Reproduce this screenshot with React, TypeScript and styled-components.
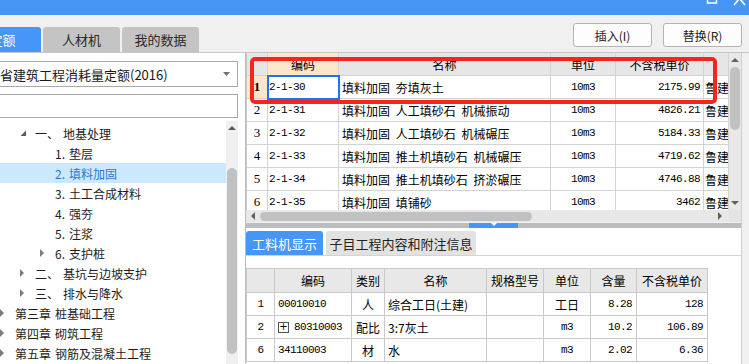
import React from "react";
import styled, { createGlobalStyle } from "styled-components";

const CJK = `"Noto Sans CJK SC", "Noto Sans", sans-serif`;
const MONO = `"Liberation Mono", "Noto Sans CJK SC", monospace`;
const BLUE = "#4596f6";

const Global = createGlobalStyle`
  html, body { margin: 0; padding: 0; }
  body { font-family: ${CJK}; font-size: 12px; color: #111; background: #f0f0f0; }
  * { box-sizing: border-box; }
`;

const Root = styled.div`
  position: relative;
  width: 749px;
  height: 364px;
  overflow: hidden;
  display: flex;
  flex-direction: column;
  background: #f0f0f0;
`;

const TitleBar = styled.div`
  height: 15px;
  flex: none;
  background: ${BLUE};
  display: flex;
  justify-content: flex-end;
  padding-right: 3px;
  overflow: hidden;
`;

const Toolbar = styled.div`
  height: 37px;
  flex: none;
  display: flex;
  align-items: flex-end;
`;

const Tabs = styled.div`
  display: flex;
  gap: 2px;
  margin-left: -36px;
`;

const Tab = styled.div<{ $active?: boolean }>`
  width: 77px;
  height: 25px;
  border-radius: 3px 3px 0 0;
  background: ${(p) => (p.$active ? BLUE : "#c4c4c4")};
  color: ${(p) => (p.$active ? "#fff" : "#2a2a2a")};
  font-size: 13px;
  display: flex;
  align-items: center;
  justify-content: center;
`;

const Buttons = styled.div`
  margin-left: auto;
  margin-bottom: 5px;
  padding-right: 7px;
  display: flex;
  gap: 11px;
`;

const Button = styled.div`
  width: 79px;
  height: 24px;
  border: 1px solid #b4b4b4;
  border-radius: 3px;
  background: #fdfdfd;
  color: #222;
  font-size: 12px;
  display: flex;
  align-items: center;
  justify-content: center;
`;

const Main = styled.div`
  flex: 1;
  display: flex;
  border-top: 1px solid #c6c6c6;
  min-height: 0;
`;

const LeftPanel = styled.div`
  width: 246px;
  flex: none;
  background: #fff;
  border-right: 1px solid #bdbdbd;
  display: flex;
  flex-direction: column;
  padding-top: 8px;
  overflow: hidden;
`;

const Select = styled.div`
  height: 26px;
  margin: 0 7px 0 -30px;
  border: 1px solid #a9a9a9;
  padding: 0 7px 0 3px;
  font-size: 13px;
  color: #1a1a1a;
  display: flex;
  align-items: center;
  justify-content: space-between;
  white-space: nowrap;
`;

const Search = styled.div`
  height: 24px;
  margin: 7px 7px 0 -30px;
  border: 1px solid #a9a9a9;
`;

const TreeArea = styled.div`
  flex: 1;
  margin-top: 3px;
  display: flex;
  min-height: 0;
`;

const TreeList = styled.div`
  flex: 1;
  padding-top: 2px;
  overflow: hidden;
`;

const TreeRow = styled.div<{ $level: number; $selected?: boolean }>`
  height: 20px;
  display: flex;
  align-items: center;
  padding-left: ${(p) => p.$level * 20}px;
  background: ${(p) => (p.$selected ? "#cce8ff" : "transparent")};
  color: ${(p) => (p.$selected ? "#3273d6" : "#1c1c1c")};
  font-size: 12px;
  white-space: nowrap;
`;

const Toggle = styled.span`
  width: 15px;
  flex: none;
  display: flex;
  align-items: center;
`;

const Label = styled.span`
  display: flex;
  gap: 4px;
`;

const VTrack = styled.div<{ $bg: string }>`
  width: 12px;
  flex: none;
  background: ${(p) => p.$bg};
  display: flex;
  flex-direction: column;
  align-items: center;
`;

const ArrowBox = styled.div<{ $h: number }>`
  height: ${(p) => p.$h}px;
  flex: none;
  display: flex;
  align-items: center;
  justify-content: center;
`;

const VThumb = styled.div<{ $top: number; $h: number }>`
  margin-top: ${(p) => p.$top}px;
  height: ${(p) => p.$h}px;
  width: 10px;
  border-radius: 5px;
  background: #c1c1c1;
  flex: none;
`;

const Spacer = styled.div`
  flex: 1;
`;

const LeftTrackWrap = styled.div`
  margin-right: 7px;
  display: flex;
`;

const RightPanel = styled.div`
  flex: 1;
  display: flex;
  min-width: 0;
`;

const Content = styled.div`
  flex: 1;
  display: flex;
  flex-direction: column;
  min-width: 0;
`;

const Strip = styled.div`
  width: 8px;
  flex: none;
  background: #f0f0f0;
  border-left: 1px solid #cfcfcf;
`;

const Upper = styled.div`
  height: 157px;
  flex: none;
  display: flex;
`;

const GridBox = styled.div`
  flex: 1;
  background: #fff;
  border-left: 1px solid #c8c8c8;
  overflow: hidden;
`;

const GRow = styled.div<{ $cols: string; $h: number }>`
  display: grid;
  grid-template-columns: ${(p) => p.$cols};
  height: ${(p) => p.$h}px;
`;

const Cell = styled.div<{
  $align?: "left" | "center" | "right";
  $bg?: string;
  $mono?: boolean;
  $pad?: number;
  $focus?: boolean;
  $line?: string;
}>`
  border-right: 1px solid ${(p) => p.$line || "#d3d3d3"};
  border-bottom: 1px solid ${(p) => p.$line || "#d3d3d3"};
  background: ${(p) => p.$bg || "#fff"};
  display: flex;
  align-items: center;
  justify-content: ${(p) =>
    p.$align === "center" ? "center" : p.$align === "right" ? "flex-end" : "flex-start"};
  padding: 0 ${(p) => (p.$align === "right" ? p.$pad ?? 3 : 0)}px 0
    ${(p) => (p.$align === "left" || !p.$align ? p.$pad ?? 2 : 0)}px;
  font-family: ${(p) => (p.$mono ? MONO : CJK)};
  font-size: ${(p) => (p.$mono ? "11px" : "12px")};
  letter-spacing: ${(p) => (p.$mono ? "-0.6px" : "0")};
  word-spacing: 3px;
  white-space: nowrap;
  overflow: hidden;
  color: #000;
  outline: ${(p) => (p.$focus ? "2px solid #2272f0" : "none")};
  outline-offset: -1px;
  position: relative;
  z-index: ${(p) => (p.$focus ? 1 : 0)};
`;

const RowNum = styled(Cell)<{ $bold?: boolean }>`
  font-family: "Liberation Serif", serif;
  font-size: 13px;
  letter-spacing: 0;
  font-weight: ${(p) => (p.$bold ? 700 : 400)};
`;

const HScrollRow = styled.div`
  height: 12px;
  flex: none;
  display: flex;
`;

const HTrack = styled.div`
  flex: 1;
  background: #e8e8e8;
  display: flex;
  align-items: center;
  padding: 0 7px 0 5px;
`;

const HThumb = styled.div`
  width: 272px;
  height: 9px;
  margin-left: 5px;
  border-radius: 5px;
  background: #c1c1c1;
`;

const Corner = styled.div`
  width: 12px;
  background: #e4e4e4;
`;

const Splitter = styled.div`
  height: 5px;
  flex: none;
  margin-top: 1px;
  background: #bdbdbd;
  display: flex;
  justify-content: center;
`;

const SplitHandle = styled.div`
  width: 49px;
  background: ${BLUE};
  display: flex;
  justify-content: center;
  align-items: flex-start;
`;

const Bottom = styled.div`
  flex: 1;
  background: #fff;
  padding-top: 3px;
  display: flex;
  flex-direction: column;
  min-height: 0;
`;

const BTabs = styled.div`
  height: 25px;
  flex: none;
  display: flex;
  gap: 3px;
  border-bottom: 1px solid #d3d3d3;
`;

const BTab = styled.div<{ $active?: boolean; $w: number }>`
  width: ${(p) => p.$w}px;
  height: 24px;
  border-radius: 3px 3px 0 0;
  background: ${(p) => (p.$active ? BLUE : "#e2e2e2")};
  color: ${(p) => (p.$active ? "#fff" : "#222")};
  font-size: 13px;
  display: flex;
  align-items: center;
  justify-content: center;
`;

const BGrid = styled.div`
  margin-top: 12px;
  width: 462px;
  border-left: 1px solid #c9c9c9;
  border-top: 1px solid #c9c9c9;
`;

const PlusBox = styled.span`
  width: 11px;
  height: 11px;
  border: 1px solid #555;
  display: inline-flex;
  align-items: center;
  justify-content: center;
  margin-right: 5px;
  font-family: "DejaVu Sans", sans-serif;
  font-size: 10px;
  line-height: 1;
  letter-spacing: 0;
`;

const RedMark = styled.div`
  position: absolute;
  left: 250px;
  top: 57px;
  width: 467px;
  height: 47px;
  border: 4px solid #f3261c;
  border-radius: 5px;
  pointer-events: none;
`;

type Dir = "up" | "down" | "left" | "right";
const Tri = ({ dir, w = 8, h = 4, color = "#606060" }: { dir: Dir; w?: number; h?: number; color?: string }) => {
  const vert = dir === "up" || dir === "down";
  const W = vert ? w : h;
  const H = vert ? h : w;
  const pts =
    dir === "up"
      ? `0,${H} ${W},${H} ${W / 2},0`
      : dir === "down"
      ? `0,0 ${W},0 ${W / 2},${H}`
      : dir === "left"
      ? `${W},0 ${W},${H} 0,${H / 2}`
      : `0,0 0,${H} ${W},${H / 2}`;
  return (
    <svg width={W} height={H} viewBox={`0 0 ${W} ${H}`}>
      <polygon points={pts} fill={color} />
    </svg>
  );
};

const OpenTri = () => (
  <svg width="7" height="7" viewBox="0 0 7 7">
    <polygon points="6,0.5 6,6 0.5,6" fill="#5a5a5a" />
  </svg>
);

const WindowIcons = () => (
  <svg width="46" height="15" viewBox="0 0 46 15">
    <rect x="7.5" y="-6" width="9" height="9" fill="none" stroke="#fff" strokeWidth="1.5" />
    <line x1="34" y1="-8" x2="45" y2="5" stroke="#fff" strokeWidth="1.6" />
    <line x1="45" y1="-8" x2="34" y2="5" stroke="#fff" strokeWidth="1.6" />
  </svg>
);

type TreeItem = { level: number; toggle?: "open" | "closed"; prefix: string; text: string; selected?: boolean };
const tree: TreeItem[] = [
  { level: 1, toggle: "open", prefix: "一、", text: "地基处理" },
  { level: 2, prefix: "1.", text: "垫层" },
  { level: 2, prefix: "2.", text: "填料加固", selected: true },
  { level: 2, prefix: "3.", text: "土工合成材料" },
  { level: 2, prefix: "4.", text: "强夯" },
  { level: 2, prefix: "5.", text: "注浆" },
  { level: 2, toggle: "closed", prefix: "6.", text: "支护桩" },
  { level: 1, toggle: "closed", prefix: "二、", text: "基坑与边坡支护" },
  { level: 1, toggle: "closed", prefix: "三、", text: "排水与降水" },
  { level: 0, toggle: "closed", prefix: "第三章", text: "桩基础工程" },
  { level: 0, toggle: "closed", prefix: "第四章", text: "砌筑工程" },
  { level: 0, toggle: "closed", prefix: "第五章", text: "钢筋及混凝土工程" },
];

const upperRows = [
  ["2-1-30", "填料加固 夯填灰土", "10m3", "2175.99"],
  ["2-1-31", "填料加固 人工填砂石 机械振动", "10m3", "4826.21"],
  ["2-1-32", "填料加固 人工填砂石 机械碾压", "10m3", "5184.33"],
  ["2-1-33", "填料加固 推土机填砂石 机械碾压", "10m3", "4719.62"],
  ["2-1-34", "填料加固 推土机填砂石 挤淤碾压", "10m3", "4746.88"],
  ["2-1-35", "填料加固 填铺砂", "10m3", "3462"],
];

const UCOLS = "21px 71px 212px 65px 88px 1fr";
const BCOLS = "28px 77px 33px 102px 57px 47px 46px 71px";
const BL = "#c9c9c9";

const bottomRows = [
  { n: "1", code: "00010010", plus: false, kind: "人", name: "综合工日(土建)", unit: "工日", unitMono: false, qty: "8.28", price: "128" },
  { n: "2", code: "80310003", plus: true, kind: "配比", name: "3:7灰土", unit: "m3", unitMono: true, qty: "10.2", price: "106.89" },
  { n: "6", code: "34110003", plus: false, kind: "材", name: "水", unit: "m3", unitMono: true, qty: "2.02", price: "6.36" },
];

export default function App() {
  return (
    <>
      <Global />
      <Root>
        <TitleBar>
          <WindowIcons />
        </TitleBar>
        <Toolbar>
          <Tabs>
            <Tab $active>定额</Tab>
            <Tab>人材机</Tab>
            <Tab>我的数据</Tab>
          </Tabs>
          <Buttons>
            <Button>插入(I)</Button>
            <Button>替换(R)</Button>
          </Buttons>
        </Toolbar>
        <Main>
          <LeftPanel>
            <Select>
              <span>山东省建筑工程消耗量定额(2016)</span>
              <Tri dir="down" w={7} h={4} color="#707070" />
            </Select>
            <Search />
            <TreeArea>
              <TreeList>
                {tree.map((t, i) => (
                  <TreeRow key={i} $level={t.level} $selected={t.selected}>
                    <Toggle>
                      {t.toggle === "open" && <OpenTri />}
                      {t.toggle === "closed" && <Tri dir="right" w={8} h={4} color="#7c7c7c" />}
                    </Toggle>
                    <Label>
                      <span>{t.prefix}</span>
                      <span>{t.text}</span>
                    </Label>
                  </TreeRow>
                ))}
              </TreeList>
              <LeftTrackWrap>
                <VTrack $bg="#f0f0f0">
                  <ArrowBox $h={13}>
                    <Tri dir="up" w={8} h={4} color="#5a5a5a" />
                  </ArrowBox>
                  <VThumb $top={34} $h={186} />
                </VTrack>
              </LeftTrackWrap>
            </TreeArea>
          </LeftPanel>
          <RightPanel>
            <Content>
              <Upper>
                <GridBox>
                  <GRow $cols={UCOLS} $h={23}>
                    <Cell $bg="#e6e6e6" />
                    <Cell $bg="#fde6c9" $align="center">编码</Cell>
                    <Cell $bg="#e6e6e6" $align="center">名称</Cell>
                    <Cell $bg="#e6e6e6" $align="center">单位</Cell>
                    <Cell $bg="#e6e6e6" $align="center">不含税单价</Cell>
                    <Cell $bg="#e6e6e6" />
                  </GRow>
                  {upperRows.map((r, i) => (
                    <GRow key={i} $cols={UCOLS} $h={23}>
                      <RowNum $align="center" $bg={i === 0 ? "#fde6c9" : "#fff"} $bold={i === 0}>
                        {i + 1}
                      </RowNum>
                      <Cell $mono $pad={1} $focus={i === 0}>{r[0]}</Cell>
                      <Cell $pad={3}>{r[1]}</Cell>
                      <Cell $mono $align="center">{r[2]}</Cell>
                      <Cell $mono $align="right" $pad={3}>{r[3]}</Cell>
                      <Cell $pad={1}>鲁建</Cell>
                    </GRow>
                  ))}
                </GridBox>
                <VTrack $bg="#e8e8e8">
                  <ArrowBox $h={14}>
                    <Tri dir="up" w={8} h={4} />
                  </ArrowBox>
                  <VThumb $top={0} $h={63} />
                  <Spacer />
                  <ArrowBox $h={14}>
                    <Tri dir="down" w={8} h={4} />
                  </ArrowBox>
                </VTrack>
              </Upper>
              <HScrollRow>
                <HTrack>
                  <Tri dir="left" w={8} h={4} />
                  <HThumb />
                  <Spacer />
                  <Tri dir="right" w={8} h={4} />
                </HTrack>
                <Corner />
              </HScrollRow>
              <Splitter>
                <SplitHandle>
                  <Tri dir="down" w={6} h={3} color="#fff" />
                </SplitHandle>
              </Splitter>
              <Bottom>
                <BTabs>
                  <BTab $active $w={77}>工料机显示</BTab>
                  <BTab $w={150}>子目工程内容和附注信息</BTab>
                </BTabs>
                <BGrid>
                  <GRow $cols={BCOLS} $h={24}>
                    <Cell $bg="#e8e8e8" $line={BL} />
                    <Cell $bg="#e8e8e8" $line={BL} $align="center">编码</Cell>
                    <Cell $bg="#e8e8e8" $line={BL} $align="center">类别</Cell>
                    <Cell $bg="#e8e8e8" $line={BL} $align="center">名称</Cell>
                    <Cell $bg="#e8e8e8" $line={BL} $align="center">规格型号</Cell>
                    <Cell $bg="#e8e8e8" $line={BL} $align="center">单位</Cell>
                    <Cell $bg="#e8e8e8" $line={BL} $align="center">含量</Cell>
                    <Cell $bg="#e8e8e8" $line={BL} $align="center">不含税单价</Cell>
                  </GRow>
                  {bottomRows.map((r, i) => (
                    <GRow key={i} $cols={BCOLS} $h={23}>
                      <Cell $line={BL} $align="center" $mono>{r.n}</Cell>
                      <Cell $line={BL} $mono $pad={3}>
                        {r.plus && <PlusBox>+</PlusBox>}
                        {r.code}
                      </Cell>
                      <Cell $line={BL} $align="center">{r.kind}</Cell>
                      <Cell $line={BL} $pad={3}>{r.name}</Cell>
                      <Cell $line={BL} />
                      <Cell $line={BL} $align="center" $mono={r.unitMono}>{r.unit}</Cell>
                      <Cell $line={BL} $align="right" $mono $pad={4}>{r.qty}</Cell>
                      <Cell $line={BL} $align="right" $mono $pad={4}>{r.price}</Cell>
                    </GRow>
                  ))}
                </BGrid>
              </Bottom>
            </Content>
            <Strip />
          </RightPanel>
        </Main>
        <RedMark />
      </Root>
    </>
  );
}
